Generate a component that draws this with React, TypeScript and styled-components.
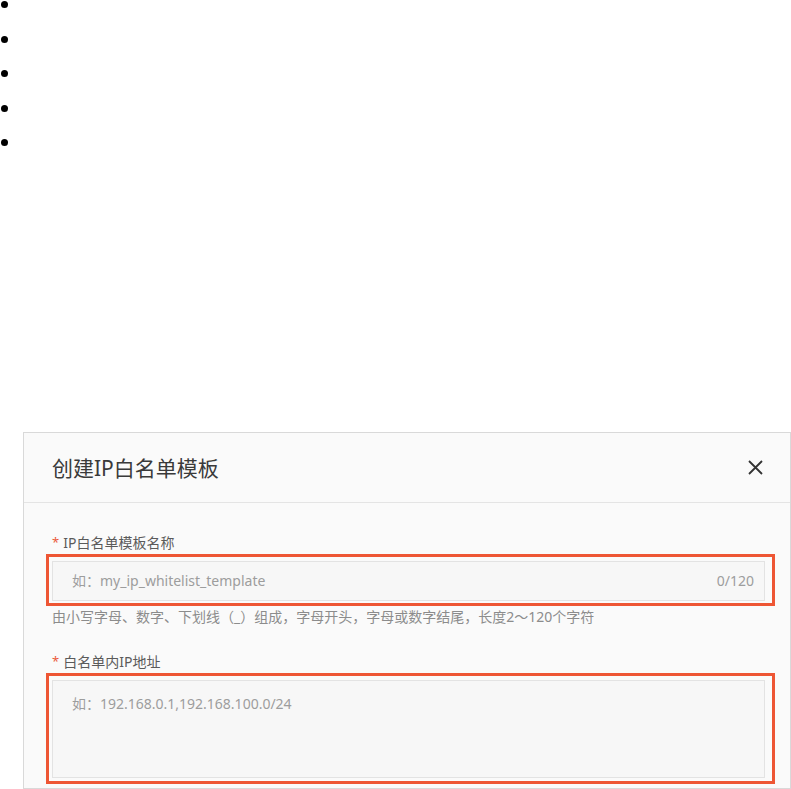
import styled, { createGlobalStyle } from 'styled-components';

const GlobalStyle = createGlobalStyle`
  html, body {
    margin: 0;
    padding: 0;
    background: #ffffff;
  }
  body {
    font-family: "Noto Sans", "Noto Sans CJK SC", sans-serif;
  }
`;

const BulletList = styled.ul`
  margin: 0;
  padding: 0;
  list-style: none;
`;

const Bullet = styled.li`
  display: flex;
  height: 34.6px;
  &::before {
    content: '';
    width: 7px;
    height: 7px;
    margin: 1px 0 0 1px;
    border-radius: 50%;
    background: #000;
  }
`;

const Dialog = styled.section`
  margin: 259px 0 0 23px;
  height: 355px;
  border: 1px solid #d9d9d9;
  background: #fafafa;
  display: flex;
  flex-direction: column;
`;

const Header = styled.header`
  height: 69px;
  border-bottom: 1px solid #e4e4e4;
  display: flex;
  align-items: center;
  justify-content: space-between;
  padding: 0 26px 0 28px;
`;

const Title = styled.h2`
  margin: 0;
  font-size: 21px;
  font-weight: 400;
  color: #3a3a3a;
`;

const CloseButton = styled.button`
  border: 0;
  padding: 0;
  background: none;
  width: 17px;
  height: 17px;
  display: flex;
  color: #333;
`;

const Body = styled.div`
  padding: 29px 25px 0 28px;
  display: flex;
  flex-direction: column;
`;

const Label = styled.label<{ $gap?: number }>`
  font-size: 14px;
  line-height: 20px;
  color: #5a5a5a;
  margin-top: ${(p) => p.$gap ?? 0}px;
  &::before {
    content: '*';
    color: #eb5a3c;
    font-size: 13px;
    margin-right: 4px;
    vertical-align: 1px;
  }
`;

const Highlight = styled.div<{ $top: number; $bottom: number }>`
  margin: 1px -10px 0 -6px;
  border: 3px solid #ee5634;
  padding: ${(p) => p.$top}px 7px ${(p) => p.$bottom}px 3px;
`;

const InputBox = styled.div`
  height: 38px;
  border: 1px solid #e3e3e3;
  background: #f7f7f7;
  display: flex;
  align-items: center;
  padding: 0 10px 0 19px;
`;

const TextInput = styled.input`
  flex: 1;
  border: 0;
  outline: none;
  background: transparent;
  font: inherit;
  font-size: 14px;
  color: #333;
  padding: 0;
  &::placeholder {
    color: #9d9d9d;
  }
`;

const Counter = styled.span`
  font-size: 14px;
  color: #9d9d9d;
`;

const TextArea = styled.textarea`
  display: block;
  box-sizing: border-box;
  width: 100%;
  height: 98px;
  border: 1px solid #e3e3e3;
  background: #f7f7f7;
  resize: none;
  outline: none;
  font: inherit;
  font-size: 14px;
  line-height: 20px;
  padding: 13px 19px;
  color: #333;
  &::placeholder {
    color: #9d9d9d;
  }
`;

const Help = styled.p`
  margin: 1px 0 0;
  font-size: 14px;
  line-height: 20px;
  color: #8c8c8c;
`;

export default function App() {
  return (
    <>
      <GlobalStyle />
      <BulletList>
        {[0, 1, 2, 3, 4].map((i) => (
          <Bullet key={i} />
        ))}
      </BulletList>
      <Dialog>
        <Header>
          <Title>创建IP白名单模板</Title>
          <CloseButton aria-label="关闭">
            <svg width="17" height="17" viewBox="0 0 17 17">
              <path d="M2 2L15 15M15 2L2 15" stroke="currentColor" strokeWidth="1.8" />
            </svg>
          </CloseButton>
        </Header>
        <Body>
          <Label>IP白名单模板名称</Label>
          <Highlight $top={4} $bottom={2}>
            <InputBox>
              <TextInput placeholder="如：my_ip_whitelist_template" />
              <Counter>0/120</Counter>
            </InputBox>
          </Highlight>
          <Help>由小写字母、数字、下划线（_）组成，字母开头，字母或数字结尾，长度2～120个字符</Help>
          <Label $gap={24}>白名单内IP地址</Label>
          <Highlight $top={4} $bottom={3}>
            <TextArea placeholder="如：192.168.0.1,192.168.100.0/24" />
          </Highlight>
        </Body>
      </Dialog>
    </>
  );
}
